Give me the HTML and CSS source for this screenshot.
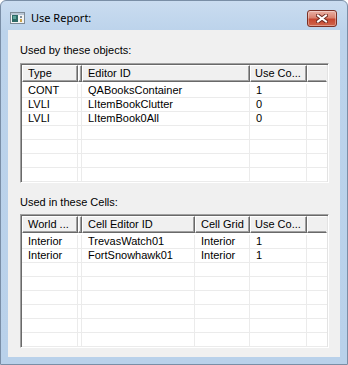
FILE: index.html
```html
<!DOCTYPE html>
<html lang="en">
<head>
    <meta charset="UTF-8">
    <title>Use Report</title>
    <link rel="stylesheet" href="styles.css">
</head>
<body>
    <div class="window">
        <div class="titlebar">
            <svg class="app-icon" width="15" height="12" viewBox="0 0 15 12">
                <rect x="0.5" y="0.5" width="14" height="11" fill="#f4f4f4" stroke="#7d8a96"/>
                <rect x="1" y="1" width="13" height="2" fill="#b9c7d6"/>
                <rect x="2" y="3" width="6" height="7" fill="#2e6b68"/>
                <rect x="3" y="4" width="3" height="3" fill="#5ea39b"/>
                <rect x="10" y="4" width="2" height="2" fill="#7e8f9f"/>
                <rect x="10" y="7" width="2" height="3" fill="#c9a24a"/>
            </svg>
            <span class="title">Use Report:</span>
            <div class="close-btn">
                <svg width="12" height="9" viewBox="0 0 12 9">
                    <path d="M2 1.5 L10 7.5 M10 1.5 L2 7.5" stroke="#6e2a20" stroke-width="4" stroke-linecap="square"/>
                    <path d="M2 1.5 L10 7.5 M10 1.5 L2 7.5" stroke="#fff" stroke-width="2" stroke-linecap="square"/>
                </svg>
            </div>
        </div>
        <div class="client">
            <div class="caption">Used by these objects:</div>
            <div class="list list-objects">
                <div class="header">
                    <div class="hcell c-first">Type</div>
                    <div class="hcell c-tiny"></div>
                    <div class="hcell c-editor">Editor ID</div>
                    <div class="hcell c-use">Use Co...</div>
                    <div class="hcell c-fill"></div>
                </div>
                <div class="rows">
                    <div class="row"><div class="cell c-first">CONT</div><div class="cell c-tiny"></div><div class="cell c-editor">QABooksContainer</div><div class="cell c-use">1</div><div class="cell c-fill"></div></div>
                    <div class="row"><div class="cell c-first">LVLI</div><div class="cell c-tiny"></div><div class="cell c-editor">LItemBookClutter</div><div class="cell c-use">0</div><div class="cell c-fill"></div></div>
                    <div class="row"><div class="cell c-first">LVLI</div><div class="cell c-tiny"></div><div class="cell c-editor">LItemBook0All</div><div class="cell c-use">0</div><div class="cell c-fill"></div></div>
                    <div class="row"><div class="cell c-first"></div><div class="cell c-tiny"></div><div class="cell c-editor"></div><div class="cell c-use"></div><div class="cell c-fill"></div></div>
                    <div class="row"><div class="cell c-first"></div><div class="cell c-tiny"></div><div class="cell c-editor"></div><div class="cell c-use"></div><div class="cell c-fill"></div></div>
                    <div class="row"><div class="cell c-first"></div><div class="cell c-tiny"></div><div class="cell c-editor"></div><div class="cell c-use"></div><div class="cell c-fill"></div></div>
                    <div class="row"><div class="cell c-first"></div><div class="cell c-tiny"></div><div class="cell c-editor"></div><div class="cell c-use"></div><div class="cell c-fill"></div></div>
                </div>
            </div>
            <div class="caption caption-cells">Used in these Cells:</div>
            <div class="list list-cells">
                <div class="header">
                    <div class="hcell c-first">World ...</div>
                    <div class="hcell c-tiny"></div>
                    <div class="hcell c-cell">Cell Editor ID</div>
                    <div class="hcell c-grid">Cell Grid</div>
                    <div class="hcell c-use">Use Co...</div>
                    <div class="hcell c-fill"></div>
                </div>
                <div class="rows">
                    <div class="row"><div class="cell c-first">Interior</div><div class="cell c-tiny"></div><div class="cell c-cell">TrevasWatch01</div><div class="cell c-grid">Interior</div><div class="cell c-use">1</div><div class="cell c-fill"></div></div>
                    <div class="row"><div class="cell c-first">Interior</div><div class="cell c-tiny"></div><div class="cell c-cell">FortSnowhawk01</div><div class="cell c-grid">Interior</div><div class="cell c-use">1</div><div class="cell c-fill"></div></div>
                    <div class="row"><div class="cell c-first"></div><div class="cell c-tiny"></div><div class="cell c-cell"></div><div class="cell c-grid"></div><div class="cell c-use"></div><div class="cell c-fill"></div></div>
                    <div class="row"><div class="cell c-first"></div><div class="cell c-tiny"></div><div class="cell c-cell"></div><div class="cell c-grid"></div><div class="cell c-use"></div><div class="cell c-fill"></div></div>
                    <div class="row"><div class="cell c-first"></div><div class="cell c-tiny"></div><div class="cell c-cell"></div><div class="cell c-grid"></div><div class="cell c-use"></div><div class="cell c-fill"></div></div>
                    <div class="row"><div class="cell c-first"></div><div class="cell c-tiny"></div><div class="cell c-cell"></div><div class="cell c-grid"></div><div class="cell c-use"></div><div class="cell c-fill"></div></div>
                    <div class="row"><div class="cell c-first"></div><div class="cell c-tiny"></div><div class="cell c-cell"></div><div class="cell c-grid"></div><div class="cell c-use"></div><div class="cell c-fill"></div></div>
                    <div class="row"><div class="cell c-first"></div><div class="cell c-tiny"></div><div class="cell c-cell"></div><div class="cell c-grid"></div><div class="cell c-use"></div><div class="cell c-fill"></div></div>
                </div>
            </div>
        </div>
    </div>
</body>
</html>
```

FILE: styles.css
```css
body {
    margin: 0;
    font-family: "Liberation Sans", Arial, sans-serif;
    font-size: 11px;
    color: #000;
    background-color: #fff;
}
.window {
    width: 348px;
    height: 365px;
    box-sizing: border-box;
    border: 1px solid #7a8ea6;
    border-radius: 6px 6px 0 0;
    background: linear-gradient(#cadcf0, #bcd3eb 30px, #b9d1ea);
    display: flex;
    flex-direction: column;
}
.titlebar {
    height: 29px;
    display: flex;
    align-items: flex-start;
    padding: 0 10px 0 9px;
}
.app-icon {
    margin-top: 11px;
    flex-shrink: 0;
}
.title {
    font-family: "Noto Sans", sans-serif;
    font-size: 11px;
    line-height: 15px;
    margin: 9px 0 0 6px;
    flex: 1;
}
.close-btn {
    margin-top: 9px;
    width: 28px;
    height: 15px;
    border: 1px solid #7b3025;
    border-radius: 3px;
    background: linear-gradient(#eab1a5, #d9826f 45%, #c6452e 55%, #d0664c);
    box-shadow: inset 0 0 0 1px rgba(255, 255, 255, 0.35);
    display: flex;
    align-items: center;
    justify-content: center;
}
.client {
    margin: 0 7px;
    height: 327px;
    box-sizing: border-box;
    background-color: #f0f0f0;
    padding: 14px 11px 9px 12px;
}
.caption {
    line-height: 13px;
    margin-bottom: 6px;
}
.caption-cells {
    margin-top: 13px;
    margin-bottom: 5px;
}
.list {
    width: 309px;
    box-sizing: border-box;
    border: 1px solid;
    border-color: #a0a0a0 #fff #fff #a0a0a0;
    padding: 1px;
    background-color: #fff;
    box-shadow: inset 1px 1px 0 #696969, inset -1px -1px 0 #e3e3e3;
    overflow: hidden;
}
.list-objects {
    height: 120px;
}
.list-cells {
    height: 134px;
}
.header {
    display: flex;
    height: 17px;
    background-color: #f0f0f0;
}
.hcell {
    box-sizing: border-box;
    height: 17px;
    line-height: 15px;
    padding-left: 5px;
    white-space: nowrap;
    overflow: hidden;
    border-top: 1px solid #fff;
    border-left: 1px solid #fff;
    border-right: 1px solid #696969;
    border-bottom: 1px solid #696969;
    box-shadow: inset -1px -1px 0 #a0a0a0;
}
.hcell.c-fill {
    border-right-color: #f0f0f0;
    box-shadow: inset 0 -1px 0 #a0a0a0;
}
.rows {
    margin-top: 2px;
}
.row {
    display: flex;
    height: 14px;
    box-sizing: border-box;
    border-bottom: 1px solid #ebebeb;
}
.cell {
    box-sizing: border-box;
    line-height: 13px;
    padding-left: 6px;
    white-space: nowrap;
    overflow: hidden;
    border-right: 1px solid #ebebeb;
}
.cell.c-fill {
    border-right: none;
}
.c-first { width: 56px; }
.c-tiny { width: 4px; padding-left: 0; }
.c-editor { width: 168px; }
.c-cell { width: 113px; }
.c-grid { width: 55px; }
.c-use { width: 57px; }
.c-fill { width: 20px; }
.hcell.c-use { padding-left: 4px; }
```
